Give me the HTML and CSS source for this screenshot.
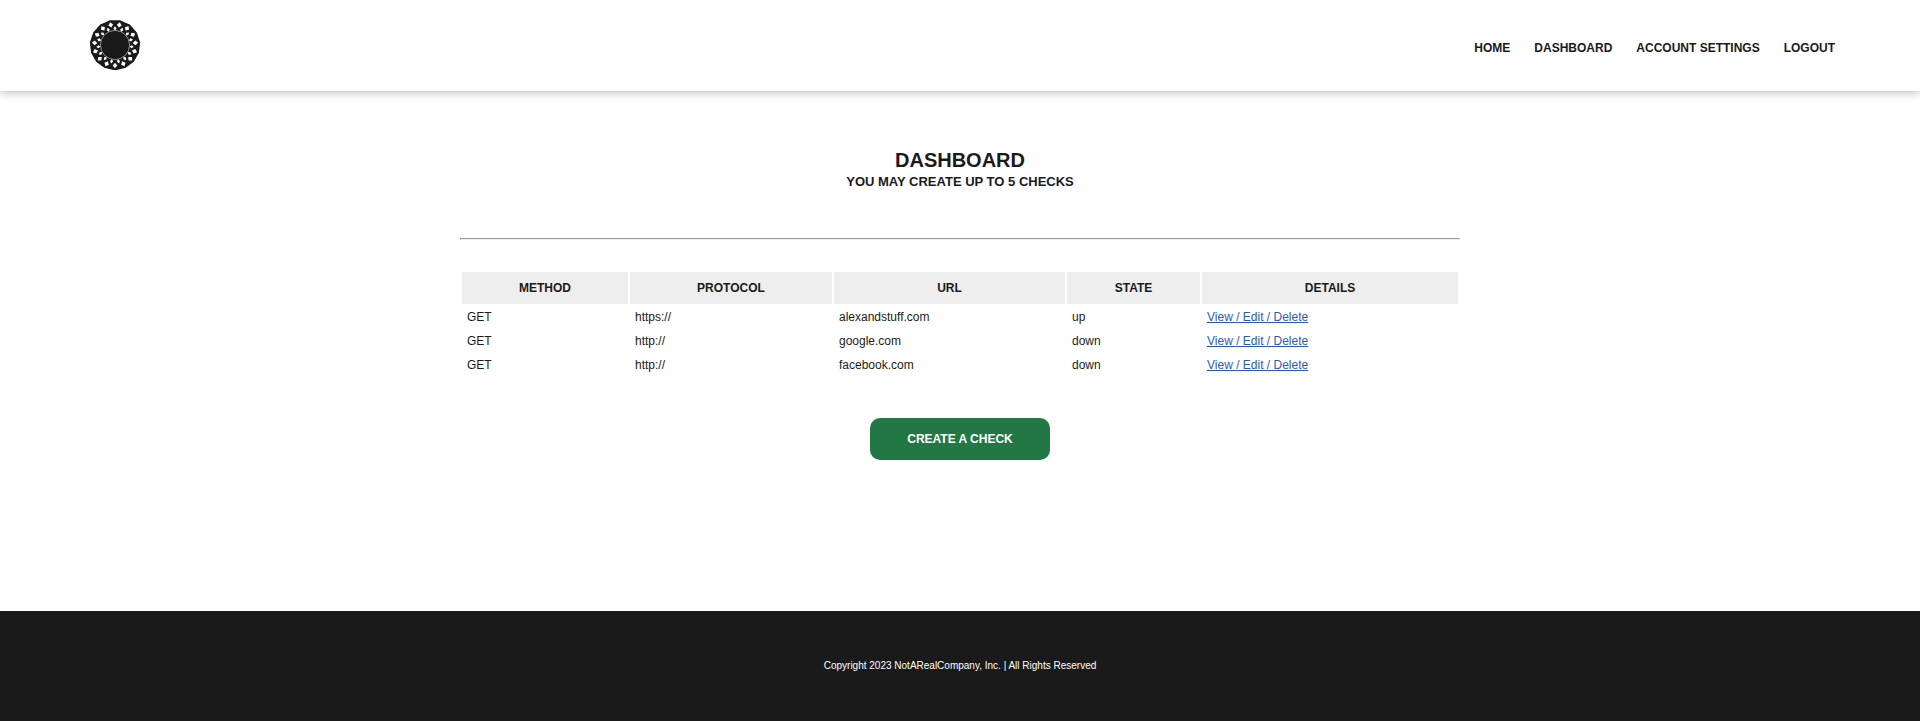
FILE: index.html
```
<!DOCTYPE html>
<html lang="en">
<head>
<meta charset="utf-8">
<title>Dashboard</title>
<link rel="stylesheet" href="styles.css">
</head>
<body>
<header class="header">
  <a class="logo" href="#" aria-label="Home">
    <svg width="52" height="52" viewBox="-26 -26 52 52" aria-hidden="true">
      <defs>
        <g id="s">
          <path d="M-5 23.8L0 25.2L5 23.8Z" fill="#1a1a1a"/>
          <path d="M0 17.8L2.4 20.5L0 23.2L-2.4 20.5Z" fill="#fff"/>
          <path transform="rotate(12)" d="M0 14.6L1.6 16.6L0 18.8L-1.6 16.6Z" fill="#fff"/>
        </g>
        <g id="t"><use href="#s"/><use href="#s" transform="rotate(24)"/><use href="#s" transform="rotate(48)"/><use href="#s" transform="rotate(72)"/><use href="#s" transform="rotate(96)"/></g>
      </defs>
      <circle r="24.7" fill="#1a1a1a"/>
      <use href="#t"/><use href="#t" transform="rotate(120)"/><use href="#t" transform="rotate(240)"/>
      <circle r="14.6" fill="none" stroke="#fff" stroke-width=".5"/>
    </svg>
  </a>
  <nav class="nav">
    <a href="#">HOME</a>
    <a href="#">DASHBOARD</a>
    <a href="#">ACCOUNT SETTINGS</a>
    <a href="#">LOGOUT</a>
  </nav>
</header>
<main class="content">
  <h1 class="title">DASHBOARD</h1>
  <h2 class="subtitle">YOU MAY CREATE UP TO 5 CHECKS</h2>
  <hr class="rule">
  <table class="checks">
    <colgroup><col class="c-method"><col class="c-protocol"><col class="c-url"><col class="c-state"><col></colgroup>
    <thead>
      <tr><th>METHOD</th><th>PROTOCOL</th><th>URL</th><th>STATE</th><th>DETAILS</th></tr>
    </thead>
    <tbody>
      <tr><td>GET</td><td>https://</td><td>alexandstuff.com</td><td>up</td><td><a href="#">View / Edit / Delete</a></td></tr>
      <tr><td>GET</td><td>http://</td><td>google.com</td><td>down</td><td><a href="#">View / Edit / Delete</a></td></tr>
      <tr><td>GET</td><td>http://</td><td>facebook.com</td><td>down</td><td><a href="#">View / Edit / Delete</a></td></tr>
    </tbody>
  </table>
  <button class="create" type="button">CREATE A CHECK</button>
</main>
<footer class="footer">Copyright 2023 NotARealCompany, Inc. | All Rights Reserved</footer>
</body>
</html>
```
FILE: styles.css
```
* { box-sizing: border-box; }
body {
  margin: 0;
  min-height: 100vh;
  display: flex;
  flex-direction: column;
  background: #fff;
  color: #1a1a1a;
  font: 12px/14px "Liberation Sans", Arial, sans-serif;
}
.header {
  display: flex;
  justify-content: space-between;
  align-items: center;
  padding: 19px 85px 20px 89px;
  box-shadow: 0 0 10px rgba(0, 0, 0, .35);
}
.logo { display: flex; }
.nav { display: flex; gap: 24px; padding-top: 5px; }
.nav a { color: #1a1a1a; font-weight: bold; text-decoration: none; }
.content {
  flex: 1;
  width: 100%;
  max-width: 1000px;
  margin: 0 auto;
  padding: 57px 0 80px;
  display: flex;
  flex-direction: column;
  align-items: center;
}
.title { margin: 0; font-size: 20px; line-height: 24px; }
.subtitle { margin: 0; font-size: 13px; line-height: 20px; }
.rule { width: 100%; margin: 46px 0 30px; border: 1px inset #eee; }
.checks { width: 100%; table-layout: fixed; border-spacing: 2px; }
.c-method { width: 166px; }
.c-protocol { width: 202px; }
.c-url { width: 231px; }
.c-state { width: 133px; }
.checks th { padding: 9px 5px; background: #eee; }
.checks td { padding: 4px 5px; }
.checks a { color: #2a5db0; }
.create {
  width: 180px;
  margin-top: 40px;
  padding: 14px;
  border: 0;
  border-radius: 10px;
  background: #217845;
  color: #fff;
  font: bold 12px/14px "Liberation Sans", Arial, sans-serif;
  cursor: pointer;
}
.footer {
  padding: 48px 16px;
  background: #1a1a1a;
  color: #fff;
  font-size: 10px;
  text-align: center;
}
```
